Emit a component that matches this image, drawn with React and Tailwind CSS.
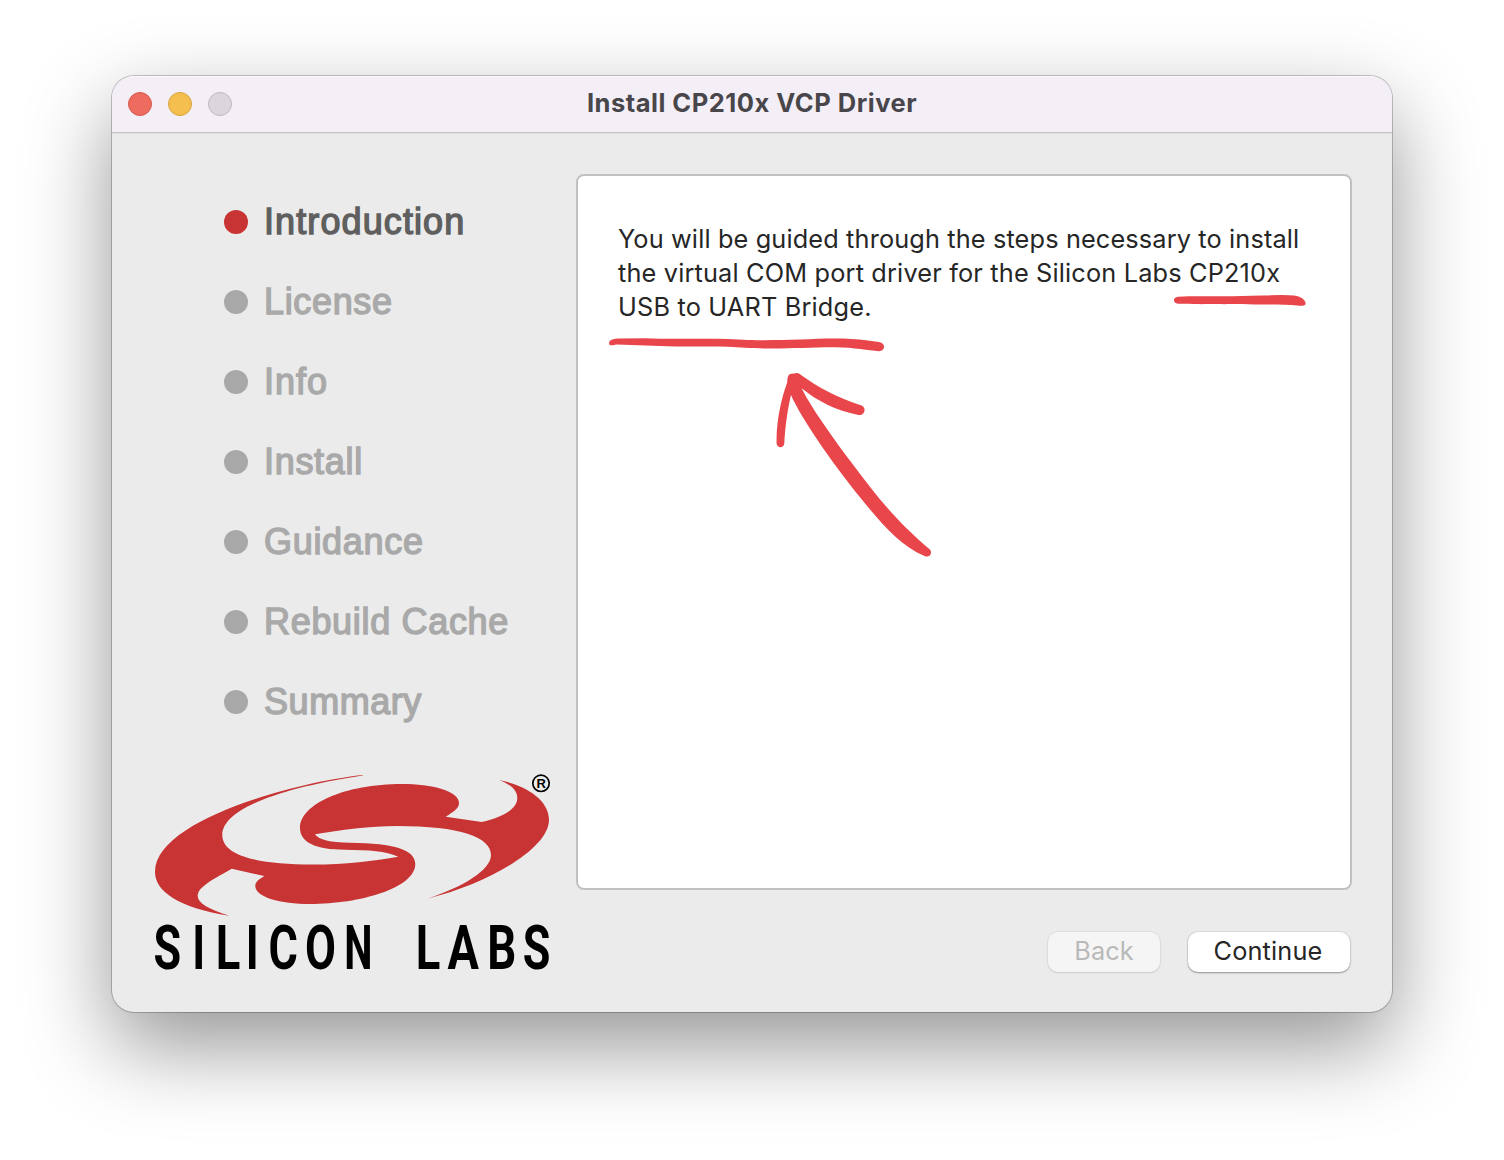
const steps = [
  { label: "Introduction", tracking: "tracking-[1.1px]" },
  { label: "License", tracking: "tracking-[0.65px]" },
  { label: "Info", tracking: "tracking-[0.95px]" },
  { label: "Install", tracking: "tracking-[0.7px]" },
  { label: "Guidance", tracking: "tracking-[0.7px]" },
  { label: "Rebuild Cache", tracking: "tracking-[0.68px]" },
  { label: "Summary", tracking: "tracking-[0.55px]" },
];

function TitleBar() {
  return (
    <header className="grid h-[57px] shrink-0 grid-cols-[1fr_auto_1fr] items-center border-b border-[#c4c2c5] bg-[#f4eff6] px-4 shadow-[inset_0_1px_0_#fbf9fc]">
      <div className="flex gap-4">
        <span className="size-6 rounded-full border border-[#d5594f] bg-[#ed6b5f]" />
        <span className="size-6 rounded-full border border-[#d9a23c] bg-[#f5bf4f]" />
        <span className="size-6 rounded-full border border-[#bcb8be] bg-[#dad6db]" />
      </div>
      <h1 className="relative -top-px whitespace-nowrap text-[25.5px] leading-8 font-bold tracking-[0.5px] text-[#48464a]">
        Install CP210x VCP Driver
      </h1>
    </header>
  );
}

function StepList() {
  return (
    <ol className="flex flex-col pl-28 pt-12">
      {steps.map((s, i) => (
        <li key={s.label} className="flex h-20 items-center gap-4">
          <span className={i === 0 ? "size-6 rounded-full bg-[#c83434]" : "size-6 rounded-full bg-[#a8a8a8]"} />
          <span
            className={`whitespace-nowrap font-['Liberation_Sans',sans-serif] text-[36px] leading-10 ${s.tracking} ${
              i === 0
                ? "text-[#5f5f5f] [-webkit-text-stroke:1.4px_#5f5f5f]"
                : "text-[#a9a9a9] [-webkit-text-stroke:1.4px_#a9a9a9]"
            }`}
          >
            {s.label}
          </span>
        </li>
      ))}
    </ol>
  );
}

// Letter, horizontal centre, width factor
const wordmark = [
  ["S", 167.4, 0.73], ["I", 198.7, 0.72], ["L", 228.1, 0.74], ["I", 252.3, 0.72], ["C", 283.2, 0.73],
  ["O", 320.6, 0.73], ["N", 358.3, 0.65], ["L", 428, 0.74], ["A", 463.2, 0.76], ["B", 501.7, 0.74],
  ["S", 536.6, 0.73],
];

function Logo() {
  return (
    <svg width="405" height="225" viewBox="150 770 405 225" className="block">
      <path
        fill="#c83434"
        d="M362.7 775C300 781.5 155 819 155 872C155 892 180 908 229.3 915.7C208 909 197.7 903 197.7 896C197.7 888 208 882 231.7 868.7L264.3 876C258 880 255.3 882 255.3 886C255.3 897 280 904 310 904C360 904 415.3 888 415.3 864C415.3 850 395 843 350 842.7C330 842.5 319 840 315 834.3C340 830 370 826 397 826C460 826 491 837 491 855C491 870 463 887 427.3 898.7C490 883 549 848 549 820C549 803 532 787 499 780C512 785 517.3 791 517.3 798C517.3 809 503 817 481.7 822L445.7 816.7C455 811 459 808 459 803C459 791 432 784 402 784C345 784 300 804 300 828C300 842 315 849.7 345 849.7C370 850 385 851 398.3 856.7C375 861 345 864.5 313 864.5C255 864.5 222.3 855 222.3 835C222.3 812.5 266 790.5 362.7 775.6Z"
      />
      <circle cx="541" cy="783.3" r="8.2" fill="none" stroke="#000" strokeWidth="1.7" />
      <text x="541.2" y="787.9" textAnchor="middle" fontSize="13" fontWeight="700" fontFamily="Liberation Sans">R</text>
      <g fontFamily="Roboto" fontSize="61.5" fontWeight="700">
        {wordmark.map(([c, x, w]) => (
          <text key={x} transform={`translate(${x} 969) scale(${w} 1)`} textAnchor="middle">{c}</text>
        ))}
      </g>
    </svg>
  );
}

function Annotations() {
  return (
    <svg width="720" height="280" viewBox="600 285 720 280" className="pointer-events-none absolute top-[109px] left-[22px]" fill="#e8464b">
      <path d="M1178 296.8C1200 295.5 1225 297.2 1262 295.6Q1285 294.6 1294 295.6C1301 296.6 1305 299.5 1305.7 303.5C1305.6 305.8 1302 306.2 1297 305.4C1270 303.8 1210 304.8 1178 303.8C1172.6 303 1172.6 297.5 1178 296.8Z" />
      <path d="M609 343C609.5 339.5 614 338.6 620 338.6L645 338.3C670 339.5 700 338.3 728 339C760 341 775 340 800 339.6C825 338 850 337.8 866 340.3L879 342C886 343.3 885.5 350.3 879 351.2C868 350.5 855 347.5 835 347.3C800 347.5 780 349.5 745 347.8C720 345.3 690 347.3 667 346.3L617 344.5C613 344.8 609.5 347 609 343Z" />
      <path d="M790 374Q792.5 373.4 794.5 373.6Q797 372 800 374.3C818 387.5 838 398 861.5 405.6C867 408 864.5 415.7 858.5 415C836 410.5 817 401 801.7 388.3C812 410 842 450 853.3 465C875 494 895 520 929.3 549C933.5 552.5 929.5 558.5 924.5 556C900 546 880 522 856.7 493.3C832 462 802 420 791 395C787.5 410 785 428 784.3 443.5C783.5 448.5 777.5 448.5 776.6 443.5C776 423 781 399 787.2 382.5Q787.2 375 790 374Z" />
    </svg>
  );
}

function Intro() {
  return (
    <article className="relative h-[716px] w-[776px] rounded-lg border-2 border-[#c1c1c1] bg-white px-10 pt-[46px]">
      <p className="text-[25.3px] leading-[34px] whitespace-nowrap text-[#262626]">
        <span className="block tracking-[0.14px]">You will be guided through the steps necessary to install</span>
        <span className="block tracking-[0.17px]">the virtual COM port driver for the Silicon Labs CP210x</span>
        <span className="block tracking-[0.18px]">USB to UART Bridge.</span>
      </p>
      <Annotations />
    </article>
  );
}

export default function App() {
  return (
    <div className="h-[1160px] w-[1504px] overflow-hidden bg-white pt-[76px] pl-28 font-['Inter',sans-serif]">
      <main className="flex h-[936px] w-[1280px] flex-col overflow-hidden rounded-[22px] bg-[#ebebeb] shadow-[0_0_0_1px_rgba(0,0,0,0.22),0_34px_86px_rgba(0,0,0,0.42)]">
        <TitleBar />
        <div className="flex grow border-t border-[#e0e0e0]">
          <aside className="flex w-[464px] flex-col">
            <StepList />
            <div className="h-0 pt-7 pl-[38px]">
              <Logo />
            </div>
          </aside>
          <section className="flex flex-col pt-10">
            <Intro />
            <div className="flex justify-end gap-7 pt-[42px] pr-0.5">
              <button className="h-10 w-28 rounded-[10px] bg-[#f5f5f5] pb-0.5 text-[25.3px] leading-[38px] tracking-[0.1px] text-[#b9b9b9] shadow-[0_0_0_1px_rgba(0,0,0,0.04),0_1px_2px_rgba(0,0,0,0.1)]">Back</button>
              <button className="h-10 w-[162px] rounded-[10px] bg-white pr-0.5 pb-0.5 text-[25.3px] leading-[38px] tracking-[0.15px] text-[#262626] shadow-[0_0_0_1px_rgba(0,0,0,0.05),0_1px_2px_rgba(0,0,0,0.35)]">Continue</button>
            </div>
          </section>
        </div>
      </main>
    </div>
  );
}
